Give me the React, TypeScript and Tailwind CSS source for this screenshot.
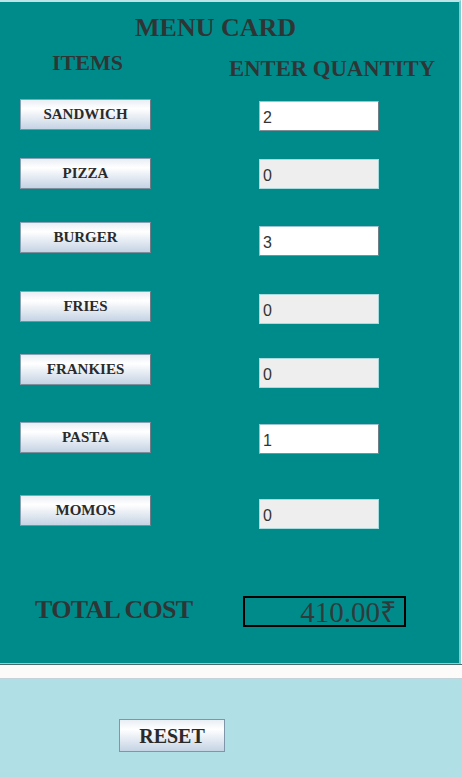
import React from "react";

type Row = { name: string; value: string; editable: boolean; rowMt: string; inMt: string };

const rows: Row[] = [
  { name: "SANDWICH", value: "2", editable: true, rowMt: "mt-[17px]", inMt: "mt-[2px]" },
  { name: "PIZZA", value: "0", editable: false, rowMt: "mt-[24px]", inMt: "mt-[1px]" },
  { name: "BURGER", value: "3", editable: true, rowMt: "mt-[29px]", inMt: "mt-[4px]" },
  { name: "FRIES", value: "0", editable: false, rowMt: "mt-[34px]", inMt: "mt-[3px]" },
  { name: "FRANKIES", value: "0", editable: false, rowMt: "mt-[28px]", inMt: "mt-[4px]" },
  { name: "PASTA", value: "1", editable: true, rowMt: "mt-[33px]", inMt: "mt-[2px]" },
  { name: "MOMOS", value: "0", editable: false, rowMt: "mt-[38px]", inMt: "mt-[4px]" },
];

const serif = "font-['Liberation_Serif','Times_New_Roman',serif]";
const btnBg =
  "bg-[linear-gradient(to_bottom,#e9eef4_0%,#ffffff_30%,#c5d3e4_100%)]";

export default function App() {
  return (
    <div className="w-[462px] h-[777px] bg-[#fdfafa] overflow-hidden flex flex-col">
      <div className="w-[462px] border-b border-b-[#4a6a6b]">
        <div className="w-[461px] h-[664px] bg-[#008b8b] border-t-2 border-t-[#bfe4e8] border-r-2 border-r-[#7ccdd2] border-b border-b-[#84d3d8] flex flex-col text-[#2f3535]">
          <div className={`${serif} font-bold text-[26px] leading-[30px] mt-[11px] ml-[135px]`}>
            MENU CARD
          </div>
          <div className={`${serif} font-bold flex items-start`}>
            <div className="ml-[52px] w-[177px] mt-[7px] text-[22px] leading-[26px]">ITEMS</div>
            <div className="mt-[13px] text-[22.7px] leading-[26px] whitespace-nowrap">ENTER QUANTITY</div>
          </div>
          {rows.map((r) => (
            <div key={r.name} className={`flex items-start h-[35px] ${r.rowMt}`}>
              <button
                className={`ml-[20px] w-[131px] h-[31px] ${btnBg} border border-[#8aa2b4] border-r-[#6f7c88] border-b-[#7d8e9d] ${serif} font-bold text-[15px] leading-none text-[#2a2a2a] flex items-center justify-center`}
              >
                {r.name}
              </button>
              <div
                className={`ml-[108px] w-[120px] h-[30px] ${r.inMt} ${
                  r.editable
                    ? "bg-white border border-t-[#9cc3cf] border-l-[#9cc3cf] border-r-[#6e7f88] border-b-[#7f8f97]"
                    : "bg-[#eeeeee] border border-[#a9dade]"
                } font-['Liberation_Sans',Arial,sans-serif] text-[16px] leading-[26px] pt-[3px] pl-[3px] text-[#333]`}
              >
                {r.value}
              </div>
            </div>
          ))}
          <div className="flex items-start mt-[64px]">
            <div className={`${serif} font-bold ml-[35px] w-[208px] text-[26px] leading-[31px] tracking-[-0.7px] whitespace-nowrap`}>
              TOTAL COST
            </div>
            <div className="mt-[2px] w-[163px] h-[31px] border-2 border-black flex items-center justify-end pr-[7px]">
              <span className={`${serif} text-[29px] leading-none pt-[2px] text-[#2f3b3b] whitespace-nowrap`}>
                410.00₹
              </span>
            </div>
          </div>
        </div>
      </div>
      <div className="h-[13px] bg-[#fdfafa]" />
      <div className="h-px bg-[#c3d3da]" />
      <div className="flex-1 bg-[#b0dfe6]">
        <button
          className={`mt-[40px] ml-[119px] w-[106px] h-[33px] ${btnBg} border border-[#7d96aa] ${serif} font-bold text-[20px] leading-none text-[#2a2a2a] flex items-center justify-center`}
        >
          RESET
        </button>
      </div>
    </div>
  );
}
